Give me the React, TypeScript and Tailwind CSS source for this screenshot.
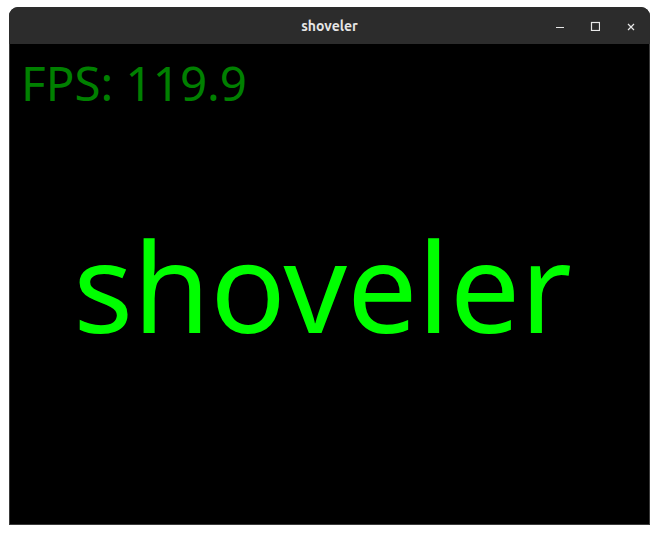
import React from "react";

export default function App() {
  return (
    <div className="w-[660px] h-[535px] bg-white pl-[9px] pt-[7px]">
      <div className="w-[641px] h-[518px] flex flex-col rounded-t-[9px] overflow-hidden bg-[#2b2b2b]">
        <div className="h-[37px] shrink-0 relative flex items-center justify-center bg-[#2c2c2c]">
          <span className="text-[14px] font-bold text-[#e6e6e6] mt-[1px]" style={{ fontFamily: "Ubuntu, 'Noto Sans', sans-serif" }}>
            shoveler
          </span>
          <div className="absolute right-0 top-0 h-full flex items-center">
            <svg width="10" height="10" viewBox="0 0 10 10" className="mr-[25px]">
              <path d="M1 6.5h8" stroke="#e8e8e8" strokeWidth="1" />
            </svg>
            <svg width="10" height="10" viewBox="0 0 10 10" className="mr-[26px]">
              <rect x="1.5" y="1.5" width="8" height="8" fill="none" stroke="#e8e8e8" strokeWidth="1.2" />
            </svg>
            <svg width="10" height="10" viewBox="0 0 10 10" className="mr-[14px] mt-[2px]">
              <path d="M2 2l6 6M8 2l-6 6" stroke="#e8e8e8" strokeWidth="1.2" />
            </svg>
          </div>
        </div>
        <div className="flex-1 flex flex-col bg-black border border-t-0 border-[#3a3a3a]" style={{ fontFamily: "'Noto Sans', 'Open Sans', sans-serif" }}>
          <div className="text-[47.5px] leading-none text-[#008000] pl-[11px] pt-[15px]">FPS: 119.9</div>
          <div className="flex-1 flex items-center justify-center pb-[62px] pr-[14px]">
            <span className="text-[125px] leading-none text-[#00ff00]">shoveler</span>
          </div>
        </div>
      </div>
    </div>
  );
}
